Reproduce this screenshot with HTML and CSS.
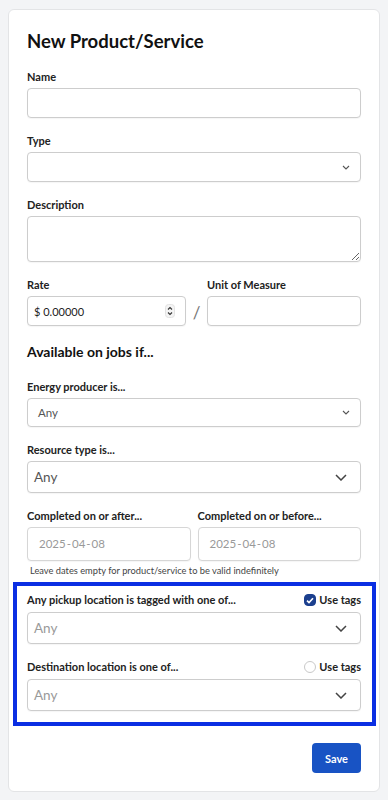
FILE: index.html
```html
<!DOCTYPE html>
<html lang="en">
<head>
  <meta charset="UTF-8" />
  <meta name="viewport" content="width=device-width, initial-scale=1.0" />
  <title>New Product/Service</title>
  <link rel="stylesheet" href="styles.css">
</head>
<body>
  <div class="card">
    <h1 class="title">New Product/Service</h1>

    <div class="field">
      <label class="label">Name</label>
      <input type="text" class="input" />
    </div>

    <div class="field">
      <label class="label">Type</label>
      <div class="input select">
        <span></span>
        <svg width="8" height="5" viewBox="0 0 8 5"><path d="M1 1l3 3 3-3" fill="none" stroke="#555" stroke-width="1.1"/></svg>
      </div>
    </div>

    <div class="field">
      <label class="label">Description</label>
      <textarea class="input textarea"></textarea>
    </div>

    <div class="rate-row">
      <div>
        <label class="label">Rate</label>
        <div class="input rate">
          <span class="rate-value">$ 0.00000</span>
          <svg width="10" height="14" viewBox="0 0 10 14"><rect x="0.5" y="0.5" width="9" height="13" rx="3" fill="#f4f4f4" stroke="#e2e2e2"/><path d="M3 5.5L5 3.5l2 2M3 8.5l2 2 2-2" fill="none" stroke="#333" stroke-width="1.1"/></svg>
        </div>
      </div>
      <div class="slash">/</div>
      <div>
        <label class="label">Unit of Measure</label>
        <input type="text" class="input" />
      </div>
    </div>

    <h2 class="subtitle">Available on jobs if...</h2>

    <div class="field">
      <label class="label">Energy producer is...</label>
      <div class="input select short">
        <span class="any-sm">Any</span>
        <svg width="8" height="5" viewBox="0 0 8 5"><path d="M1 1l3 3 3-3" fill="none" stroke="#555" stroke-width="1.1"/></svg>
      </div>
    </div>

    <div class="field">
      <label class="label">Resource type is...</label>
      <div class="input picker">
        <span class="any">Any</span>
        <svg width="12" height="7" viewBox="0 0 12 7"><path d="M1 1l5 5 5-5" fill="none" stroke="#444" stroke-width="1.5"/></svg>
      </div>
    </div>

    <div class="date-row">
      <div>
        <label class="label">Completed on or after...</label>
        <div class="input date">2025<span class="dash">-</span>04<span class="dash">-</span>08</div>
      </div>
      <div>
        <label class="label">Completed on or before...</label>
        <div class="input date">2025<span class="dash">-</span>04<span class="dash">-</span>08</div>
      </div>
    </div>
    <p class="hint">Leave dates empty for product/service to be valid indefinitely</p>

    <div class="highlight">
      <div class="field">
        <div class="label-row">
          <label class="label">Any pickup location is tagged with one of...</label>
          <span class="tag-toggle">
            <span class="check on">
              <svg width="8" height="7" viewBox="0 0 8 7"><path d="M1 3.6l2 2L7 1.2" fill="none" stroke="#fff" stroke-width="1.6"/></svg>
            </span>
            Use tags
          </span>
        </div>
        <div class="input picker">
          <span class="any light">Any</span>
          <svg width="12" height="7" viewBox="0 0 12 7"><path d="M1 1l5 5 5-5" fill="none" stroke="#444" stroke-width="1.5"/></svg>
        </div>
      </div>

      <div class="field last">
        <div class="label-row">
          <label class="label">Destination location is one of...</label>
          <span class="tag-toggle">
            <span class="check"></span>
            Use tags
          </span>
        </div>
        <div class="input picker">
          <span class="any light">Any</span>
          <svg width="12" height="7" viewBox="0 0 12 7"><path d="M1 1l5 5 5-5" fill="none" stroke="#444" stroke-width="1.5"/></svg>
        </div>
      </div>
    </div>

    <div class="actions">
      <button class="save">Save</button>
    </div>
  </div>
</body>
</html>
```

FILE: styles.css
```css
* {
  box-sizing: border-box;
}
body {
  margin: 0;
  padding: 9px 8px 7px;
  background: #f3f4f6;
  font-family: Lato, "Open Sans", Arial, sans-serif;
  color: #222;
}
.card {
  background: #fff;
  border: 1px solid #e3e4e6;
  border-radius: 6px;
  padding: 20px 18px 18px;
}
.title {
  margin: 0 0 18px;
  font-size: 18.5px;
  line-height: 22px;
  font-weight: 700;
  color: #111;
}
.subtitle {
  margin: 17px 0 19px;
  font-size: 14px;
  line-height: 18px;
  font-weight: 700;
  color: #111;
}
.field {
  margin-bottom: 16px;
}
.field.last {
  margin-bottom: 0;
}
.label {
  display: block;
  margin-bottom: 4px;
  font-size: 11px;
  line-height: 14px;
  font-weight: 700;
  color: #222;
}
.input {
  display: block;
  width: 100%;
  height: 30px;
  border: 1px solid #cdcdcd;
  border-radius: 4px;
  background: #fff;
  font-family: inherit;
  font-size: 12px;
  padding: 0 8px;
  outline: none;
  box-shadow: 0 1px 1px rgba(0, 0, 0, 0.04);
}
.textarea {
  height: 46px;
  resize: vertical;
  padding: 6px 8px;
}
.select {
  display: flex;
  align-items: center;
  justify-content: space-between;
  padding: 0 10px 0 10px;
}
.select.short {
  height: 29px;
}
.any-sm {
  font-size: 11.5px;
  color: #555;
}
.picker {
  display: flex;
  align-items: center;
  justify-content: space-between;
  height: 32px;
  padding: 0 13px 0 6px;
}
.any {
  font-size: 13.5px;
  color: #555;
}
.any.light {
  color: #999;
}
.rate-row {
  display: grid;
  grid-template-columns: 159fr 21px 154fr;
}
.rate {
  display: flex;
  align-items: center;
  justify-content: space-between;
  padding: 0 10px 0 6px;
}
.rate-value {
  font-size: 11px;
  color: #222;
}
.slash {
  align-self: end;
  height: 30px;
  line-height: 34px;
  text-align: center;
  font-size: 17px;
  color: #777;
}
.date-row {
  display: grid;
  grid-template-columns: 1fr 1fr;
  column-gap: 7px;
}
.date {
  height: 34px;
  line-height: 32px;
  padding: 0 11px;
  font-size: 11.5px;
  color: #999;
  border-color: #d6d6d6;
}
.dash {
  margin: 0 1px;
}
.hint {
  margin: 4px 0 5px 3px;
  font-size: 9.3px;
  line-height: 12px;
  color: #444;
}
.highlight {
  margin: 0 -15px 0 -14px;
  border: 4px solid #0a2ee3;
  padding: 7px 11px 11px 10px;
}
.label-row {
  display: flex;
  justify-content: space-between;
  align-items: center;
  margin-bottom: 5px;
}
.label-row .label {
  margin-bottom: 0;
}
.tag-toggle {
  display: flex;
  align-items: center;
  gap: 3px;
  font-size: 11px;
  line-height: 14px;
  font-weight: 700;
  color: #222;
}
.check {
  display: flex;
  align-items: center;
  justify-content: center;
  width: 12px;
  height: 12px;
  border: 1px solid #c9c9c9;
  border-radius: 6px;
  background: #fff;
}
.check.on {
  border-color: #1b3f8e;
  border-radius: 4px;
  background: #1b3f8e;
}
.actions {
  display: flex;
  justify-content: flex-end;
  margin-top: 17px;
}
.save {
  width: 49px;
  height: 30px;
  border: none;
  border-radius: 4px;
  background: #1853c4;
  color: #fff;
  font-family: inherit;
  font-size: 11px;
  font-weight: 700;
  cursor: pointer;
}
```
